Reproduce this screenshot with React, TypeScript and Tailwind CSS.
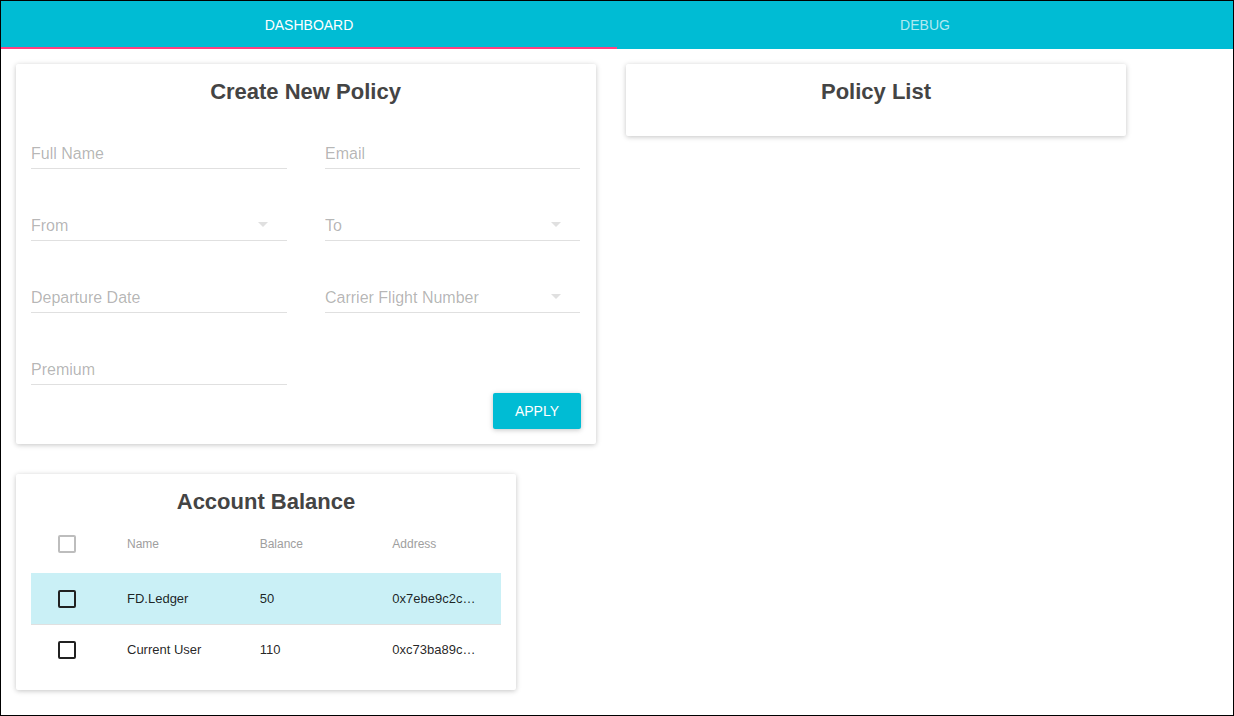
import { ReactNode } from 'react';

const font = { fontFamily: '"Liberation Sans", Arial, sans-serif' };

const accounts = [
  { name: 'FD.Ledger', balance: '50', address: '0x7ebe9c2c4f1a8b3d92e05c7f6a41b8d3e2c9f017', selected: true },
  { name: 'Current User', balance: '110', address: '0xc73ba89c0d5e2f71a94b3c8e6d20f5a1b7c4e936', selected: false },
];

function Card({ className, children }: { className: string; children: ReactNode }) {
  return (
    <div className={`bg-white rounded-[2px] shadow-[0_1px_6px_rgba(0,0,0,0.12),0_1px_4px_rgba(0,0,0,0.12)] ${className}`}>
      {children}
    </div>
  );
}

function CardTitle({ children }: { children: ReactNode }) {
  return (
    <h2 className="pt-[15px] text-center text-[22px] leading-[26px] font-bold text-[#444]">{children}</h2>
  );
}

function Field({ label, select }: { label: string; select?: boolean }) {
  return (
    <div className="h-[72px] flex flex-col justify-end pb-2">
      <div className="h-[30px] flex items-center justify-between border-b border-[#e0e0e0]">
        <span className="text-[16px] text-[rgba(0,0,0,0.3)]">{label}</span>
        {select && (
          <svg width="24" height="24" viewBox="0 0 24 24" className="mr-[12px] mt-[-4px]" fill="#e0e0e0">
            <path d="M7 10l5 5 5-5z" />
          </svg>
        )}
      </div>
    </div>
  );
}

function Check({ light }: { light?: boolean }) {
  return (
    <div
      className={`w-[18px] h-[18px] rounded-[2px] border-2 ${light ? 'border-[#bdbdbd]' : 'border-[#212121]'}`}
    />
  );
}

export default function App() {
  return (
    <div style={font} className="w-[1234px] h-[716px] border border-black bg-white overflow-hidden">
      <div className="flex h-[48px] bg-[#00bcd4]">
        <div className="relative w-[616px] flex items-center justify-center text-[14px] text-white">
          DASHBOARD
          <div className="absolute left-0 bottom-0 w-full h-[2px] bg-[#ff4081]" />
        </div>
        <div className="flex-1 flex items-center justify-center text-[14px] text-white/70">DEBUG</div>
      </div>

      <div className="flex gap-[30px] pl-[15px] pt-[15px]">
        <div className="flex flex-col gap-[30px]">
          <Card className="w-[580px] pl-[15px] pr-[16px] pb-[15px]">
            <CardTitle>Create New Policy</CardTitle>
            <div className="grid grid-cols-[256px_255px] gap-x-[38px]">
              <Field label="Full Name" />
              <Field label="Email" />
              <Field label="From" select />
              <Field label="To" select />
              <Field label="Departure Date" />
              <Field label="Carrier Flight Number" select />
              <Field label="Premium" />
            </div>
            <div className="flex justify-end -mr-px">
              <button className="w-[88px] h-[36px] rounded-[2px] bg-[#00bcd4] text-white text-[14px] shadow-[0_1px_6px_rgba(0,0,0,0.12),0_1px_4px_rgba(0,0,0,0.12)]">
                APPLY
              </button>
            </div>
          </Card>

          <Card className="w-[500px] px-[15px] pb-[15px]">
            <CardTitle>Account Balance</CardTitle>
            <div>
              <div className="grid grid-cols-[72px_1fr_1fr_1fr] h-[58px] pb-px items-center text-[12px] text-[#9e9e9e]">
                <div className="pl-[27px]"><Check light /></div>
                <div className="pl-[24px]">Name</div>
                <div className="pl-[24px]">Balance</div>
                <div className="pl-[24px]">Address</div>
              </div>
              {accounts.map((a, i) => (
                <div
                  key={a.name}
                  className={`grid grid-cols-[72px_1fr_1fr_1fr] items-center text-[13px] text-[rgba(0,0,0,0.87)] ${a.selected ? 'bg-[#caf0f6]' : ''} ${i === 0 ? 'h-[52px] border-b border-[#e0e0e0]' : 'h-[50px]'}`}
                >
                  <div className="pl-[27px]"><Check /></div>
                  <div className="pl-[24px] pr-[24px] truncate">{a.name}</div>
                  <div className="pl-[24px] pr-[24px] truncate">{a.balance}</div>
                  <div className="pl-[24px] pr-[24px] truncate">{a.address}</div>
                </div>
              ))}
            </div>
          </Card>
        </div>

        <Card className="w-[500px] h-[72px] self-start">
          <CardTitle>Policy List</CardTitle>
        </Card>
      </div>
    </div>
  );
}
